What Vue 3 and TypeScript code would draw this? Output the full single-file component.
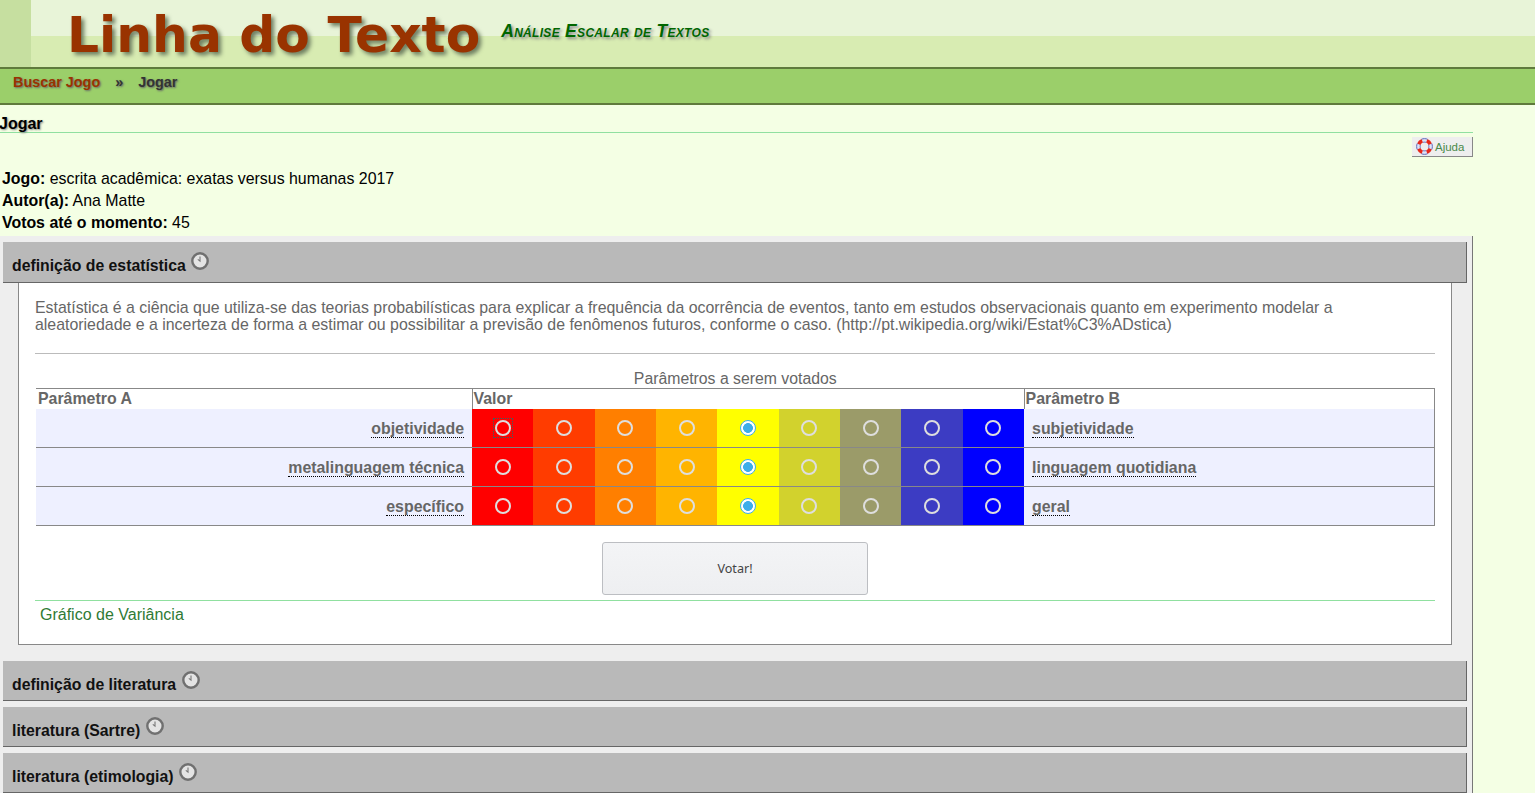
<script setup lang="ts">
import { ref } from "vue";

interface Row {
  left: string;
  right: string;
  value: number;
}

const colors = ["#ff0000", "#ff3c00", "#ff7f00", "#ffb400", "#ffff00", "#d2d22d", "#9b9b69", "#3c3cc3", "#0000ff"];

const rows = ref<Row[]>([
  { left: "objetividade", right: "subjetividade", value: 4 },
  { left: "metalinguagem técnica", right: "linguagem quotidiana", value: 4 },
  { left: "específico", right: "geral", value: 4 },
]);

const closedSections = ["definição de literatura", "literatura (Sartre)", "literatura (etimologia)"];
</script>

<template>
  <div class="page">
    <header class="banner">
      <div class="banner-side"></div>
      <h1 class="logo">Linha do Texto</h1>
      <div class="tagline">Análise Escalar de Textos</div>
    </header>
    <nav class="crumbs">
      <a class="crumb-link">Buscar Jogo</a>
      <span class="crumb-sep">»</span>
      <span class="crumb-now">Jogar</span>
    </nav>

    <main class="main">
      <h2 class="page-title">Jogar</h2>
      <div class="help-row">
        <button class="help-btn" type="button">
          <svg width="17" height="17" viewBox="0 0 16 16">
            <circle cx="8" cy="8" r="5.8" fill="none" stroke="#dfe3f7" stroke-width="3" />
            <circle cx="8" cy="8" r="5.8" fill="none" stroke="#e8281a" stroke-width="3.4" pathLength="8" stroke-dasharray="1 1" stroke-dashoffset="-0.5" />
            <circle cx="8" cy="8" r="7.4" fill="none" stroke="#5a64b8" stroke-width="0.9" pathLength="8" stroke-dasharray="1 1" stroke-dashoffset="0.5" />
            <circle cx="8" cy="8" r="4.1" fill="none" stroke="#5a64b8" stroke-width="0.9" pathLength="8" stroke-dasharray="1 1" stroke-dashoffset="0.5" />
          </svg>
          Ajuda
        </button>
      </div>

      <div class="info-block">
        <div class="info"><b>Jogo:</b> escrita acadêmica: exatas versus humanas 2017</div>
        <div class="info"><b>Autor(a):</b> Ana Matte</div>
        <div class="info"><b>Votos até o momento:</b> 45</div>
      </div>

      <section class="accordion">
        <h3 class="acc-head">
          definição de estatística
          <svg class="clock" width="18" height="18" viewBox="0 0 18 18">
            <circle cx="9" cy="9" r="7.7" fill="#e4e4e4" stroke="#707070" stroke-width="2.4" />
            <path d="M9 4.4v4.8L6.8 7.4" fill="none" stroke="#777" stroke-width="1.1" />
          </svg>
        </h3>
        <div class="acc-body">
          <p class="definition">
            Estatística é a ciência que utiliza-se das teorias probabilísticas para explicar a frequência da ocorrência de eventos, tanto em estudos observacionais quanto em experimento modelar a aleatoriedade e a incerteza de forma a estimar ou possibilitar a previsão de fenômenos futuros, conforme o caso. (http://pt.wikipedia.org/wiki/Estat%C3%ADstica)
          </p>
          <hr class="grey-rule" />
          <table class="vote-table">
            <caption>Parâmetros a serem votados</caption>
            <colgroup>
              <col class="col-side-a" />
              <col v-for="c in colors" :key="c" class="col-value" />
              <col class="col-side-b" />
            </colgroup>
            <thead>
              <tr>
                <th class="col-a">Parâmetro A</th>
                <th colspan="9">Valor</th>
                <th class="col-b">Parâmetro B</th>
              </tr>
            </thead>
            <tbody>
              <tr v-for="(row, r) in rows" :key="row.left">
                <td class="param left"><span class="term">{{ row.left }}</span></td>
                <td v-for="(c, i) in colors" :key="c" class="cell" :style="{ background: c }">
                  <span class="radio-box" :class="{ focused: r === 0 && i === 0 }">
                    <input v-model="row.value" class="radio" type="radio" :name="'p' + r" :value="i" />
                  </span>
                </td>
                <td class="param right"><span class="term">{{ row.right }}</span></td>
              </tr>
            </tbody>
          </table>
          <div class="vote-row">
            <button class="vote-btn" type="button">Votar!</button>
          </div>
          <div class="variance">Gráfico de Variância</div>
        </div>

        <h3 v-for="s in closedSections" :key="s" class="acc-head closed">
          {{ s }}
          <svg class="clock" width="18" height="18" viewBox="0 0 18 18">
            <circle cx="9" cy="9" r="7.7" fill="#e4e4e4" stroke="#707070" stroke-width="2.4" />
            <path d="M9 4.4v4.8L6.8 7.4" fill="none" stroke="#777" stroke-width="1.1" />
          </svg>
        </h3>
      </section>
    </main>
  </div>
</template>

<style>
html,
body {
  margin: 0;
  background: #f4ffe4;
  overflow: hidden;
}
</style>

<style scoped>
.page {
  height: 793px;
  overflow: hidden;
  font-family: "Liberation Sans", Arial, sans-serif;
  font-size: 15.9px;
  color: #000;
}

.banner {
  height: 67px;
  display: flex;
  align-items: flex-start;
  background: linear-gradient(to bottom, #e8f4d8 0, #e8f4d8 36px, #d8ecb2 36px, #d8ecb2 100%);
  border-bottom: 2px solid #5f7a3c;
}

.banner-side {
  width: 31px;
  height: 67px;
  flex: none;
  background: #c6dfa0;
}

.logo {
  margin: 4px 0 0 36px;
  font-family: "DejaVu Sans", Verdana, sans-serif;
  font-size: 50.3px;
  line-height: 62px;
  font-weight: bold;
  color: #993300;
  text-shadow: 3px 3px 4px #6d7d60;
}

.tagline {
  margin: 21px 0 0 21px;
  font-size: 17.5px;
  letter-spacing: 0.3px;
  line-height: 20px;
  font-weight: bold;
  font-style: italic;
  font-variant: small-caps;
  color: #006600;
  text-shadow: 2px 2px 3px #888;
}

.crumbs {
  height: 34px;
  display: flex;
  align-items: flex-start;
  padding-left: 13px;
  background: #9bcf6a;
  border-bottom: 2px solid #5f7a3c;
  font-size: 14.4px;
  line-height: 26px;
  font-weight: bold;
  text-shadow: 1px 1px 2px #666;
}

.crumb-link {
  color: #993300;
}

.crumb-sep {
  margin: 0 15px;
  color: #333;
}

.crumb-now {
  color: #333;
}

.main {
  width: 1473px;
}

.page-title {
  margin: 9px 0 0 -1px;
  height: 18px;
  font-size: 16px;
  line-height: 20px;
  font-weight: bold;
  border-bottom: 1px solid #90e0a0;
  text-shadow: 1px 1px 2px #888;
}

.help-row {
  display: flex;
  justify-content: flex-end;
  margin-top: 4px;
}

.help-btn {
  width: 61px;
  height: 20px;
  display: flex;
  align-items: center;
  gap: 2px;
  padding: 0 0 0 4px;
  background: #eeeeee;
  border: none;
  border-right: 1px solid #888;
  border-bottom: 1px solid #888;
  box-sizing: border-box;
  font-family: inherit;
  font-size: 11.5px;
  color: #4a8a4a;
}

.info-block {
  margin-top: 11px;
}

.info {
  height: 22px;
  line-height: 22px;
  padding-left: 2px;
}

.accordion {
  margin-top: 2px;
  padding: 6px 0 0 3px;
  background: #eeeeee;
  border-right: 1px solid #777;
  min-height: 600px;
}

.acc-head {
  position: relative;
  width: 1464px;
  height: 41px;
  margin: 0;
  padding: 0 0 0 9px;
  box-sizing: border-box;
  background: #b9b9b9;
  border-right: 1px solid #666;
  border-bottom: 1px solid #666;
  font-size: 15.8px;
  line-height: 48px;
  font-weight: bold;
  color: #111;
}

.acc-head.closed {
  height: 40px;
  margin-bottom: 6px;
}

.clock {
  position: relative;
  top: -6px;
  margin-left: 1px;
  vertical-align: middle;
}

.acc-body {
  width: 1434px;
  margin: 0 0 16px 15px;
  padding: 16px 16px 0;
  height: 362px;
  box-sizing: border-box;
  background: #fff;
  border: 1px solid #888;
  border-top: none;
  color: #666;
}

.definition {
  margin: 0;
  padding-right: 80px;
  font-size: 15.9px;
  line-height: 17px;
}

.grey-rule {
  height: 1px;
  margin: 20px 0 0;
  border: none;
  background: #bbb;
}

.vote-table {
  width: 1398px;
  margin: 16px 0 0 1px;
  border-collapse: collapse;
  table-layout: fixed;
  font-size: 15.9px;
}

.col-side-a {
  width: 436px;
}

.col-value {
  width: 61.33px;
}

.col-side-b {
  width: 410px;
}

.vote-table caption {
  line-height: 18px;
  font-size: 15.8px;
  color: #666;
}

.vote-table th {
  height: 20px;
  padding: 0 0 0 1px;
  text-align: left;
  font-weight: bold;
  line-height: 20px;
  border-top: 1px solid #888;
  border-left: 1px solid #888;
  color: #666;
}

.vote-table th.col-a {
  padding-left: 2px;
  border-left: none;
}

.vote-table th.col-b {
  border-right: 1px solid #888;
}

.vote-table td {
  height: 38px;
  padding: 0;
  border-bottom: 1px solid #888;
}

.param {
  background: #eef0ff;
  font-weight: bold;
  color: #666;
}

.vote-table td.param.left {
  height: 37px;
  text-align: right;
  padding: 1px 8px 0 0;
}

.vote-table td.param.right {
  height: 37px;
  padding: 1px 0 0 8px;
  border-right: 1px solid #888;
}

.term {
  border-bottom: 1px dotted #000;
}

.cell {
  text-align: center;
  line-height: 0;
}

.radio-box {
  display: inline-block;
  width: 18px;
  height: 18px;
  line-height: 0;
  box-sizing: border-box;
  padding: 1px;
  vertical-align: middle;
}

.radio-box.focused {
  outline: 1px dotted #2a6a6a;
  outline-offset: 0;
}

.radio {
  appearance: none;
  display: block;
  width: 16px;
  height: 16px;
  margin: 0;
  box-sizing: border-box;
  border: 2px solid #dedede;
  border-radius: 50%;
  background: transparent;
}

.radio:checked {
  border-color: #3daee9;
  border-width: 1.5px;
  background: radial-gradient(circle, #3daee9 0, #3daee9 4.6px, #fff 5.2px);
}

.vote-row {
  display: flex;
  justify-content: center;
  margin-top: 16px;
}

.vote-btn {
  width: 266px;
  height: 53px;
  background: linear-gradient(to bottom, #f3f4f6, #eeeff1);
  border: 1px solid #bcbec2;
  border-radius: 3px;
  font-family: "Noto Sans", "Open Sans", sans-serif;
  font-size: 12.6px;
  color: #444;
}

.variance {
  margin-top: 5px;
  padding: 5px 0 0 5px;
  border-top: 1px solid #90e0a0;
  font-size: 16px;
  line-height: 18px;
  color: #2f7a35;
}
</style>
